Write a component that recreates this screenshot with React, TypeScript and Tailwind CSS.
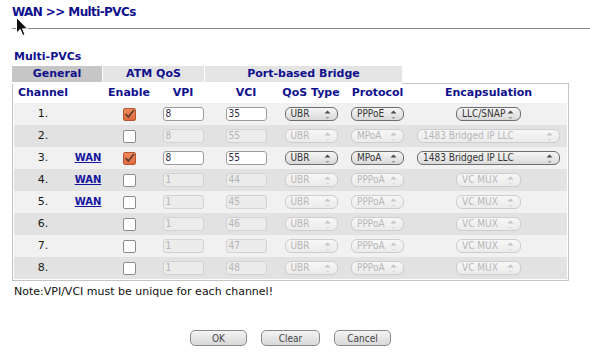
import React from "react";

type Row = {
  n: number;
  wan: boolean;
  on: boolean;
  vpi: string;
  vci: string;
  proto: string;
  enc: string;
};

const rows: Row[] = [
  { n: 1, wan: false, on: true, vpi: "8", vci: "35", proto: "PPPoE", enc: "LLC/SNAP" },
  { n: 2, wan: false, on: false, vpi: "8", vci: "55", proto: "MPoA", enc: "1483 Bridged IP LLC" },
  { n: 3, wan: true, on: true, vpi: "8", vci: "55", proto: "MPoA", enc: "1483 Bridged IP LLC" },
  { n: 4, wan: true, on: false, vpi: "1", vci: "44", proto: "PPPoA", enc: "VC MUX" },
  { n: 5, wan: true, on: false, vpi: "1", vci: "45", proto: "PPPoA", enc: "VC MUX" },
  { n: 6, wan: false, on: false, vpi: "1", vci: "46", proto: "PPPoA", enc: "VC MUX" },
  { n: 7, wan: false, on: false, vpi: "1", vci: "47", proto: "PPPoA", enc: "VC MUX" },
  { n: 8, wan: false, on: false, vpi: "1", vci: "48", proto: "PPPoA", enc: "VC MUX" },
];

const narrow = "font-['Liberation_Sans_Narrow','DejaVu_Sans_Condensed','Liberation_Sans',sans-serif]";
const cols = "grid grid-cols-[56px_34px_48px_60px_66px_64px_69px_153px] justify-items-center items-center";

const Arrows = ({ on }: { on: boolean }) => (
  <svg width="7" height="11" viewBox="0 0 7 11" className="shrink-0">
    <polygon points="0.5,4.5 3.5,1.5 6.5,4.5" fill={on ? "#4a4a4a" : "#c4c4c4"} />
    <polygon points="1.5,8 3.5,10 5.5,8" fill={on ? "#9a9a9a" : "#dadada"} />
  </svg>
);

const Select = ({ value, width, on }: { value: string; width: string; on: boolean }) => (
  <div
    className={`flex h-[14px] items-center justify-between rounded-[6px] border pr-[6px] pl-[5px] text-[10px] leading-none ${narrow} ${width} ${
      on
        ? "border-[#6e6e6e] bg-gradient-to-b from-[#f6f6f6] to-[#d9d9d9] text-[#333]"
        : "border-[#cdcdcd] bg-gradient-to-b from-[#f7f7f7] to-[#ebebeb] text-[#b6b6b6]"
    }`}
  >
    <span className="whitespace-nowrap">{value}</span>
    <Arrows on={on} />
  </div>
);

const Input = ({ value, on }: { value: string; on: boolean }) => (
  <div
    className={`flex h-[14px] w-[41px] items-center rounded-[3px] border pl-[2px] text-[10px] leading-none ${narrow} ${
      on ? "border-[#9c9c9c] bg-white text-[#2b2b45]" : "border-[#d2d2d2] bg-[#ececec] text-[#b4b4b4]"
    }`}
  >
    {value}
  </div>
);

const Check = ({ on }: { on: boolean }) =>
  on ? (
    <div className="flex h-[13px] w-[13px] items-center justify-center rounded-[2px] border border-[#b4562f] bg-gradient-to-b from-[#f08a5c] to-[#de6a3c]">
      <svg width="11" height="10" viewBox="0 0 11 10">
        <path d="M1.5 5 L4.3 8 L10 1" fill="none" stroke="#5a3a30" strokeWidth="1.6" />
      </svg>
    </div>
  ) : (
    <div className="h-[13px] w-[13px] rounded-[2px] border border-[#8c8c8c] bg-white" />
  );

const Button = ({ label, width }: { label: string; width: string }) => (
  <div
    className={`flex h-[16px] items-center justify-center rounded-[5px] border border-[#8a8a8a] bg-gradient-to-b from-[#f4f4f4] to-[#d8d8d8] text-[10px] text-[#444] ${narrow} ${width}`}
  >
    {label}
  </div>
);

export default function App() {
  return (
    <div className="relative h-[359px] w-[590px] overflow-hidden bg-white font-['DejaVu_Sans',sans-serif]">
      <div className="pt-[5px] pl-[12px] text-[12px] leading-[14px] font-bold tracking-[-0.6px] text-[#10108c]">
        WAN &gt;&gt; Multi-PVCs
      </div>
      <div className="mt-[9px] ml-[12px] border-t border-[#8a8a8a]" />

      <div className="mt-[21px] pl-[14px] text-[11px] leading-[13px] font-bold text-[#10108c]">Multi-PVCs</div>

      <div className="ml-[12px] w-[557px]">
        <div className="mt-[3px] flex h-[18px] text-[11px] font-bold text-[#10108c]">
          <div className="flex h-[16px] w-[90px] items-center justify-center bg-[#c6c6c6]">General</div>
          <div className="ml-[1px] flex h-[16px] w-[101px] items-center justify-center bg-[#e4e4e4]">ATM QoS</div>
          <div className="ml-[1px] flex h-[16px] w-[197px] items-center justify-center bg-[#e4e4e4]">
            Port-based Bridge
          </div>
          <div className="h-[18px] flex-1 border-b border-[#c4c4c4]" />
        </div>

        <div className="border-x border-b border-[#c4c4c4] px-[1px] pb-[1px]">
          <div className={`${cols} h-[19px] pl-[1px] text-[11px] font-bold text-[#10108c]`}>
            <div>Channel</div>
            <div />
            <div>Enable</div>
            <div>VPI</div>
            <div>VCI</div>
            <div>QoS Type</div>
            <div>Protocol</div>
            <div>Encapsulation</div>
          </div>
          {rows.map((r) => (
            <div
              key={r.n}
              className={`${cols} h-[22px] pl-[1px] text-[11px] text-[#1a1a1a] ${
                r.n % 2 ? "bg-[#f1f1f1]" : "bg-[#e2e2e2]"
              }`}
            >
              <div>{r.n}.</div>
              <div>
                {r.wan && <span className="text-[10px] font-bold text-[#1515a0] underline">WAN</span>}
              </div>
              <Check on={r.on} />
              <Input value={r.vpi} on={r.on} />
              <Input value={r.vci} on={r.on} />
              <Select value="UBR" width="w-[53px]" on={r.on} />
              <Select value={r.proto} width="w-[53px]" on={r.on} />
              <Select
                value={r.enc}
                width={r.enc.startsWith("1483") ? "w-[143px]" : "w-[65px]"}
                on={r.on}
              />
            </div>
          ))}
        </div>

        <div className="mt-[4px] pl-[2px] text-[11px] leading-[13px] text-[#111]">
          Note:VPI/VCI must be unique for each channel!
        </div>

        <div className="mt-[32px] flex justify-center gap-[14px]">
          <Button label="OK" width="w-[57px]" />
          <Button label="Clear" width="w-[59px]" />
          <Button label="Cancel" width="w-[57px]" />
        </div>
      </div>

      <svg className="absolute top-[17px] left-[16px]" width="13" height="20" viewBox="0 0 13 20">
        <path d="M0.5 0.5 L0.5 16 L4.2 12.5 L6.8 18.5 L9 17.5 L6.5 11.8 L11.5 11.8 Z" fill="#111" stroke="#fff" strokeWidth="1" />
      </svg>
    </div>
  );
}
